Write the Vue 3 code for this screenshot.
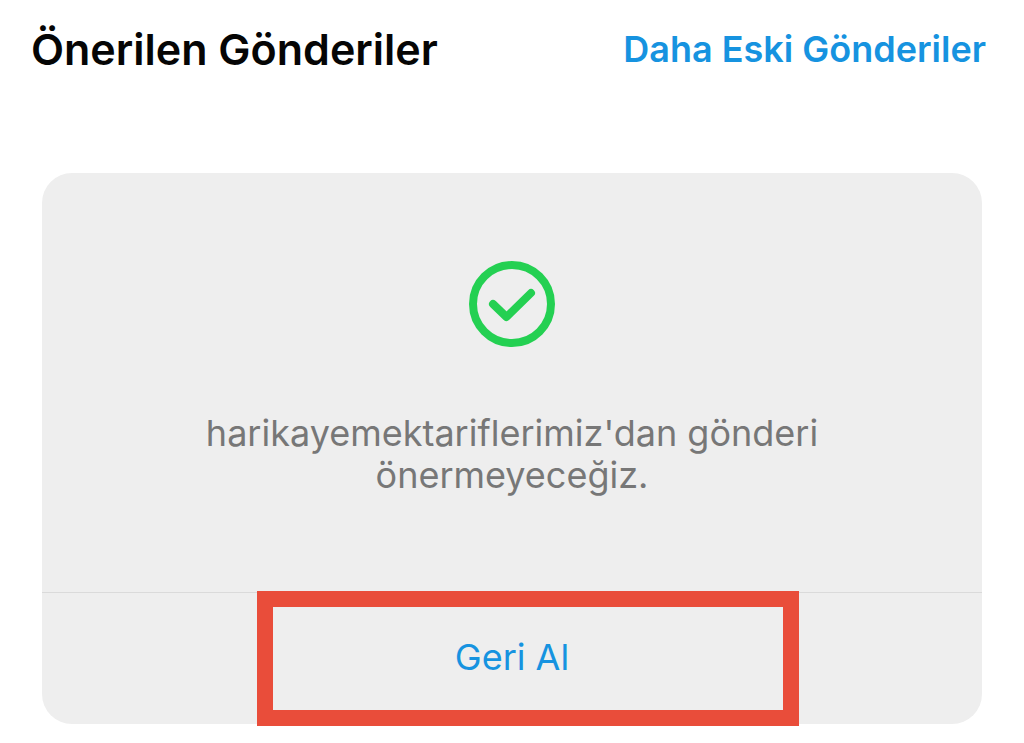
<script setup>
</script>

<template>
  <main class="page">
    <header class="header">
      <h1 class="title">Önerilen Gönderiler</h1>
      <a class="older" href="#">Daha Eski Gönderiler</a>
    </header>
    <section class="card">
      <div class="message">
        <svg class="check" viewBox="0 0 86 86" aria-hidden="true">
          <circle cx="43" cy="43" r="39" />
          <path d="M24 43 37.500 56 62 32" />
        </svg>
        <p class="text">harikayemektariflerimiz'dan gönderi önermeyeceğiz.</p>
      </div>
      <div class="footer">
        <button class="undo" type="button">Geri Al</button>
        <span class="marker" aria-hidden="true"></span>
      </div>
    </section>
  </main>
</template>

<style>
body {
  background: #fff;
}
</style>

<style scoped>
.page {
  font-family: Inter, "Liberation Sans", sans-serif;
  padding: 19px 42px 18px;
}
.header {
  display: flex;
  justify-content: space-between;
  align-items: center;
  height: 60px;
  margin: 0 -4px 0 -11px;
  white-space: nowrap;
}
.title {
  margin: 0;
  font-size: 43px;
  font-weight: 600;
  color: #050505;
}
.older {
  font-size: 36px;
  font-weight: 600;
  color: #1693e0;
  text-decoration: none;
}
.card {
  margin-top: 94px;
  border-radius: 30px;
  background: #eee;
}
.message {
  display: flex;
  flex-direction: column;
  align-items: center;
  padding: 88px 150px 96px;
}
.check {
  width: 86px;
  height: 86px;
  fill: none;
  stroke: #24d052;
  stroke-width: 8;
  stroke-linecap: round;
  stroke-linejoin: round;
}
.text {
  margin: 65px 0 0;
  font-size: 36px;
  line-height: 42px;
  color: #777;
  text-align: center;
}
.footer {
  position: relative;
  border-top: 1px solid #dadada;
}
.undo {
  display: block;
  width: 100%;
  height: 131px;
  padding: 0 0 4px;
  border: 0;
  background: transparent;
  font: inherit;
  font-size: 36px;
  color: #1693e0;
  cursor: pointer;
}
.marker {
  position: absolute;
  top: -2px;
  bottom: -2px;
  left: 215px;
  right: 183px;
  border: 16px solid #e94d3a;
  pointer-events: none;
}
</style>
